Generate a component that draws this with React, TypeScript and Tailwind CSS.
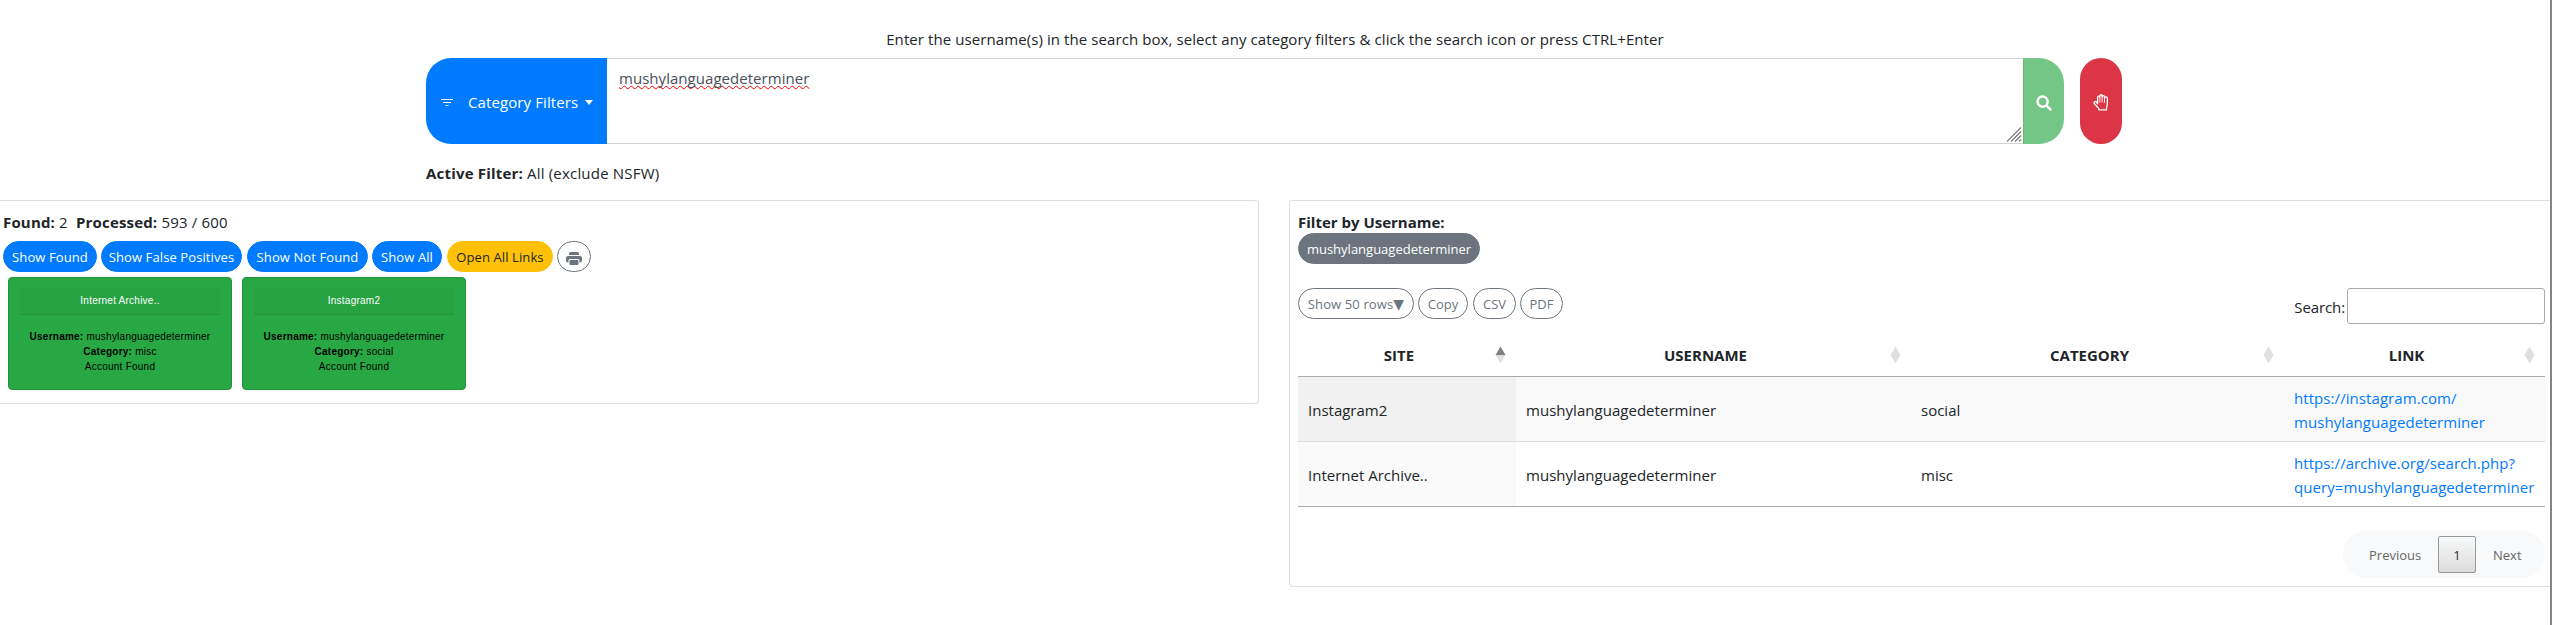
import React from "react";

const SEGOE = "font-['Open_Sans',sans-serif]";

function FilterIcon() {
  return (
    <svg width="12" height="9" viewBox="0 0 12 9" fill="none" stroke="#fff" strokeWidth="1">
      <path d="M0 1.5h12M2 4.5h8M4.5 7.5h3" />
    </svg>
  );
}

function SearchIcon() {
  return (
    <svg width="16" height="16" viewBox="0 0 16 16" fill="none" stroke="#fff" strokeWidth="2.4">
      <circle cx="6.6" cy="6.6" r="5.1" />
      <path d="M10.4 10.4l4.2 4.2" strokeLinecap="round" />
    </svg>
  );
}

function HandIcon() {
  return (
    <svg width="16" height="17" viewBox="0 0 16 17" fill="none" stroke="#fff" strokeWidth="1.3" strokeLinejoin="round" strokeLinecap="round">
      <path d="M4.6 9.5V3.3a1.1 1.1 0 0 1 2.3 0V1.9a1.1 1.1 0 0 1 2.3 0v.9a1.1 1.1 0 0 1 2.3 0v1.4a1.3 1.3 0 0 1 2.8 0v6c0 1.7-.8 2.6-.8 4.1v1.6H5.8v-1.2c0-1.2-4.6-3.8-4.8-6 0-1.3 1.8-1.7 2.5-.5l1.1 1.6" />
      <path d="M6.9 3.3v5M9.2 2.8v5.5M11.5 4v4.3" strokeWidth="0.9" />
    </svg>
  );
}

function PrinterIcon() {
  return (
    <svg width="16" height="13" viewBox="0 0 16 13" fill="#6c757d">
      <path d="M4.5 0h7A1.5 1.5 0 0 1 13 1.5V3H3V1.5A1.5 1.5 0 0 1 4.5 0z" />
      <path d="M2 4h12a2 2 0 0 1 2 2v2.500a2 2 0 0 1-2 2h-.5V8.500A1.500 1.500 0 0 0 12 7H4A1.500 1.500 0 0 0 2.500 8.500v2H2a2 2 0 0 1-2-2V6a2 2 0 0 1 2-2z" />
      <rect x="3.500" y="8" width="9" height="5" rx="1" />
    </svg>
  );
}

function SortIcon({ asc = false }: { asc?: boolean }) {
  return (
    <svg className="absolute right-[10px] top-[13px]" width="11" height="18" viewBox="0 0 11 18">
      <path d="M5.5 0.500L10.500 9h-10z" fill={asc ? "#808080" : "#e0e0e0"} />
      <path d="M5.5 17.500L10.500 9h-10z" fill="#e0e0e0" />
    </svg>
  );
}

function Pill({ children, className }: { children: React.ReactNode; className: string }) {
  return (
    <button className={`flex h-[31px] items-center justify-center whitespace-nowrap rounded-[16px] border text-[13px] ${className}`}>
      {children}
    </button>
  );
}

function ResultCard({ site, category }: { site: string; category: string }) {
  return (
    <div className="h-[113px] w-[224px] rounded-[4px] border border-[#23923d] bg-[#28a745] px-[11px] pt-[10px] text-center font-['Liberation_Sans',Arial,sans-serif] text-[10px] leading-[15px] text-black">
      <div className="h-[27px] rounded-t-[3px] border-b border-[#23923d] bg-[#27a243] pt-[5px] tracking-[0.24px] text-white">{site}</div>
      <div className="-mx-[10px] pt-[14px] tracking-[0.24px]">
        <div><b>Username:</b> mushylanguagedeterminer</div>
        <div><b>Category:</b> {category}</div>
        <div>Account Found</div>
      </div>
    </div>
  );
}

const columns = ["SITE", "USERNAME", "CATEGORY", "LINK"];
const rows = [
  { site: "Instagram2", user: "mushylanguagedeterminer", category: "social", link: ["https://instagram.com/", "mushylanguagedeterminer"] },
  { site: "Internet Archive..", user: "mushylanguagedeterminer", category: "misc", link: ["https://archive.org/search.php?", "query=mushylanguagedeterminer"] },
];
const GRID = "grid grid-cols-[218px_395px_373px_261px]";

export default function App() {
  return (
    <div className={`flex h-[625px] w-[2553px] overflow-hidden bg-white text-[15px] leading-6 text-[#212529] ${SEGOE}`}>
      <div className="w-[2550px] shrink-0">
        <p className="pt-[27px] text-center tracking-[0.085px]"><span className="whitespace-nowrap">Enter the username(s) in the search box, select any category filters &amp; click the search icon or press CTRL+Enter</span></p>
        <div className="mt-[7px] flex h-[86px] pl-[426px]">
          <button className="flex w-[181px] items-center rounded-l-[25px] bg-[#007bff] pl-[15px] pt-[2px] text-white">
            <FilterIcon />
            <span className="ml-[15px] w-[112px] whitespace-nowrap text-left tracking-[0.1px]">Category Filters</span>
            <span className="ml-[5px] border-x-[4.5px] border-t-[5px] border-x-transparent border-t-white" />
          </button>
          <div className="flex w-[1416px] items-start justify-between border-y border-[#ced4da] pl-[12px] pt-[7px] text-[#495057]">
            <span className="tracking-[0.04px] underline decoration-[#f00] decoration-wavy decoration-[1px] underline-offset-[1px] [text-decoration-skip-ink:none]">mushylanguagedeterminer</span>
            <svg className="mr-[1px] self-end" width="15" height="16" viewBox="0 0 15 16" stroke="#777" strokeWidth="1.2">
              <path d="M0 14.500L14 .5M4 14.500L14 4.500M8 14.500L14 8.500M12 14.500L14 12.500" />
            </svg>
          </div>
          <button className="flex w-[41px] items-center justify-center rounded-r-[25px] border-l border-[#66b978] bg-[#74c686] pt-[3px]"><SearchIcon /></button>
          <button className="ml-4 flex w-[42px] items-center justify-center rounded-[25px] bg-[#dc3545] pt-[2px]"><HandIcon /></button>
        </div>
        <p className="mt-[17px] pl-[426px] tracking-[0.19px]"><b>Active Filter:</b> All (exclude NSFW)</p>

        <div className="mt-[15px] flex items-start gap-[30px]">
          <section className="h-[204px] w-[1259px] rounded-r-[4px] border border-l-0 border-[#dfdfdf] pl-[3px] pt-[9px]">
            <p className="tracking-[0.17px]"><b>Found:</b> 2&nbsp; <b>Processed:</b> 593 / 600</p>
            <div className="mt-[7px] flex tracking-[0.1px]">
              <Pill className="w-[94px] border-[#007bff] bg-[#007bff] text-white">Show Found</Pill>
              <Pill className="ml-[4px] w-[141px] border-[#007bff] bg-[#007bff] text-white">Show False Positives</Pill>
              <Pill className="ml-[5px] w-[121px] border-[#007bff] bg-[#007bff] text-white">Show Not Found</Pill>
              <Pill className="ml-[4px] w-[70px] border-[#007bff] bg-[#007bff] text-white">Show All</Pill>
              <Pill className="ml-[5px] w-[106px] border-[#ffc107] bg-[#ffc107] text-[#212529]">Open All Links</Pill>
              <Pill className="ml-[4px] w-[34px] border-[#6c757d] bg-white pt-[3px]"><PrinterIcon /></Pill>
            </div>
            <div className="ml-[5px] mt-[5px] flex gap-[10px]">
              <ResultCard site="Internet Archive.." category="misc" />
              <ResultCard site="Instagram2" category="social" />
            </div>
          </section>

          <section className="h-[387px] w-[1261px] rounded-l-[4px] border border-r-0 border-[#dfdfdf] pl-[8px] pt-[9px]">
            <p><b>Filter by Username:</b></p>
            <Pill className="-mt-px w-[182px] border-[#6c757d] bg-[#6c757d] text-white">mushylanguagedeterminer</Pill>
            <div className="mt-6 flex w-[1247px] items-start">
              <Pill className="w-[116px] border-[#6c757d] tracking-[0.12px] text-[#6c757d]">Show 50 rows<span className="font-['DejaVu_Sans'] text-[14px]">▼</span></Pill>
              <Pill className="ml-[4px] w-[50px] border-[#6c757d] text-[#6c757d]">Copy</Pill>
              <Pill className="ml-[5px] w-[43px] border-[#6c757d] text-[#6c757d]">CSV</Pill>
              <Pill className="ml-[4px] w-[43px] border-[#6c757d] text-[#6c757d]">PDF</Pill>
              <label className="ml-auto flex items-center gap-[2px]">
                <span className="pt-[2px] tracking-[-0.1px]">Search:</span>
                <input className="h-[36px] w-[198px] rounded-[3px] border border-[#aaa] bg-white" />
              </label>
            </div>
            <div className="mt-[9px] w-[1247px]">
              <div className={`${GRID} h-[44px] border-b border-[#a9a9a9] font-bold`}>
                {columns.map((c, i) => (
                  <div key={c} className="relative pr-[16px] pt-[10px] text-center">
                    {c}
                    <SortIcon asc={i === 0} />
                  </div>
                ))}
              </div>
              {rows.map((r, i) => (
                <div key={r.site} className={`${GRID} h-[65px] border-b ${i === 0 ? "border-[#dcdcdc] bg-[#f9f9f9]" : "border-[#aaa] bg-white"}`}>
                  <div className={`flex items-center pl-[10px] pt-[2px] ${i === 0 ? "bg-[#f1f1f1]" : "bg-[#fafafa]"}`}>{r.site}</div>
                  <div className="flex items-center pl-[10px] pt-[2px] tracking-[0.03px]">{r.user}</div>
                  <div className="flex items-center pl-[10px] pt-[2px]">{r.category}</div>
                  <a className="whitespace-nowrap pl-[10px] pt-[9px] tracking-[0.07px] text-[#007bff]">{r.link[0]}<br />{r.link[1]}</a>
                </div>
              ))}
            </div>
            <div className="mt-[24px] flex w-[1247px] justify-end">
              <div className="flex h-[47px] w-[202px] items-center rounded-[24px] bg-[#f8f9fa] text-[13px] text-[#666]">
                <span className="w-[95px] pl-[26px]">Previous</span>
                <span className="flex h-[37px] w-[38px] items-center justify-center rounded-[2px] border border-[#979797] bg-gradient-to-b from-[#f8f9fa] to-[#dcdcdc] text-[#333]">1</span>
                <span className="pl-[17px]">Next</span>
              </div>
            </div>
          </section>
        </div>
      </div>
      <div className="w-[2px] shrink-0 bg-[#848484]" />
    </div>
  );
}
